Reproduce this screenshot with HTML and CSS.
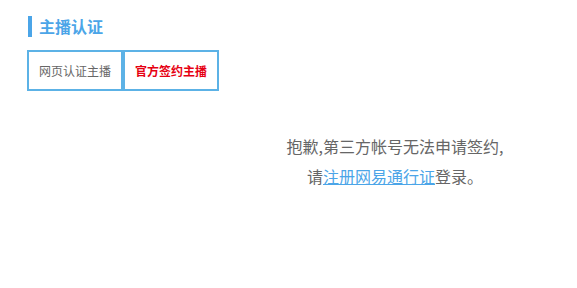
FILE: index.html
```html
<!DOCTYPE html>
<html lang="zh-CN">
  <head>
    <meta charset="UTF-8" />
    <title>主播认证</title>
    <link rel="stylesheet" href="styles.css">
  </head>
  <body>
    <div class="page">
      <h2 class="title">主播认证</h2>

      <!-- tabs -->
      <div class="tabs">
        <div class="tab">网页认证主播</div>
        <div class="tab active">官方签约主播</div>
      </div>

      <div class="notice">
        <p>抱歉,第三方帐号无法申请签约,</p>
        <p>请<a href="#">注册网易通行证</a>登录。</p>
      </div>
    </div>
  </body>
</html>
```

FILE: styles.css
```css
:root {
  --blue: #4ba5e8;
  --border: #5cb2e6;
  --grey: #666666;
  --red: #e60012;
}

* {
  margin: 0;
  padding: 0;
  box-sizing: border-box;
  font-family: "Microsoft YaHei", "Noto Sans CJK SC", sans-serif;
}

body {
  background: #ffffff;
  color: var(--grey);
}

.page {
  padding: 16px 0 0 27px;
}

.title {
  display: flex;
  align-items: center;
  height: 21px;
  padding-left: 7px;
  margin-left: 1px;
  border-left: 4px solid var(--blue);
  color: var(--blue);
  font-size: 16px;
  font-weight: bold;
  line-height: 21px;
}

.tabs {
  display: flex;
  margin-top: 13px;
}

.tab {
  width: 96px;
  height: 41px;
  border: 2px solid var(--border);
  display: flex;
  align-items: center;
  justify-content: center;
  font-size: 12px;
  color: var(--grey);
}

.tab.active {
  color: var(--red);
  font-weight: bold;
}

.notice {
  margin: 40px 0 0 186px;
  text-align: center;
  font-size: 16px;
  line-height: 30px;
  color: var(--grey);
}

.notice a {
  color: var(--blue);
  text-decoration: underline;
}
```
